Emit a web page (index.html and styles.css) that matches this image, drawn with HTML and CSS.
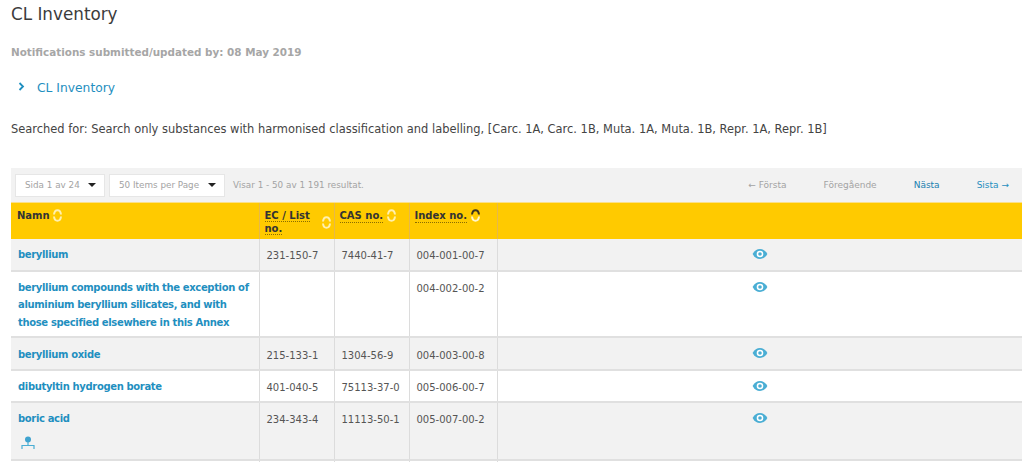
FILE: index.html
```html
<!DOCTYPE html>
<html lang="en">
<head>
    <meta charset="UTF-8">
    <title>CL Inventory</title>
    <link rel="stylesheet" href="styles.css">
</head>
<body>
    <svg class="sprites" width="0" height="0" aria-hidden="true">
        <symbol id="eye" viewBox="0 0 16 12">
            <path d="M0.6 6C2.4 2.7 5 1 8 1s5.6 1.700 7.400 5C13.600 9.300 11 11 8 11S2.400 9.300 0.600 6z" fill="#4aaed4"/>
            <circle cx="8" cy="6" r="3.300" fill="#fff"/>
            <circle cx="8" cy="6" r="1.800" fill="#4aaed4"/>
        </symbol>
        <symbol id="sort" viewBox="0 0 9 13">
            <path d="M1 5.500C1.300 2.800 2.700 1.200 4.500 1.200S7.700 2.800 8 5.500" fill="none" stroke="#fff0b0" stroke-width="2"/>
            <path d="M1 7.500C1.300 10.200 2.700 11.800 4.500 11.800S7.700 10.200 8 7.500" fill="none" stroke="#fff0b0" stroke-width="2"/>
        </symbol>
        <symbol id="sort-up" viewBox="0 0 9 13">
            <path d="M1 5.500C1.300 2.800 2.700 1.200 4.500 1.200S7.700 2.800 8 5.500" fill="none" stroke="#3a3320" stroke-width="2"/>
            <path d="M1 7.500C1.300 10.200 2.700 11.800 4.500 11.800S7.700 10.200 8 7.500" fill="none" stroke="#fff6cc" stroke-width="2"/>
        </symbol>
    </svg>

    <h1 class="page-title">CL Inventory</h1>
    <p class="notified">Notifications submitted/updated by: 08 May 2019</p>
    <a class="crumb" href="#">
        <svg class="crumb-arrow" width="7" height="9" viewBox="0 0 7 9"><path d="M1.500 1L5 4.500L1.500 8" fill="none" stroke="#1f8fc0" stroke-width="1.800"/></svg>
        <span>CL Inventory</span>
    </a>
    <p class="searched">Searched for: Search only substances with harmonised classification and labelling, [Carc. 1A, Carc. 1B, Muta. 1A, Muta. 1B, Repr. 1A, Repr. 1B]</p>

    <div class="toolbar">
        <div class="select select-page"><span>Sida 1 av 24</span><i class="caret"></i></div>
        <div class="select select-items"><span>50 Items per Page</span><i class="caret"></i></div>
        <span class="result-count">Visar 1 - 50 av 1 191 resultat.</span>
        <nav class="pager">
            <span>← Första</span>
            <span>Föregående</span>
            <a class="pager-next" href="#">Nästa</a>
            <a href="#">Sista →</a>
        </nav>
    </div>

    <table class="results">
        <colgroup>
            <col class="col-name"><col class="col-ec"><col class="col-cas"><col class="col-index"><col>
        </colgroup>
        <thead>
            <tr>
                <th><span class="th-inner th-name"><span>Namn</span><svg class="sort"><use href="#sort"/></svg></span></th>
                <th><span class="th-inner th-wrap"><span><abbr>EC / List</abbr> <abbr>no.</abbr></span><svg class="sort sort-mid"><use href="#sort"/></svg></span></th>
                <th><span class="th-inner"><abbr>CAS no.</abbr><svg class="sort"><use href="#sort"/></svg></span></th>
                <th><span class="th-inner"><abbr>Index no.</abbr><svg class="sort"><use href="#sort-up"/></svg></span></th>
                <th></th>
            </tr>
        </thead>
        <tbody>
            <tr>
                <td class="name"><a href="#">beryllium</a></td>
                <td>231-150-7</td><td>7440-41-7</td><td>004-001-00-7</td>
                <td class="view"><svg class="eye"><use href="#eye"/></svg></td>
            </tr>
            <tr>
                <td class="name"><a href="#">beryllium compounds with the exception of aluminium beryllium silicates, and with those specified elsewhere in this Annex</a></td>
                <td></td><td></td><td>004-002-00-2</td>
                <td class="view"><svg class="eye"><use href="#eye"/></svg></td>
            </tr>
            <tr class="row-tall">
                <td class="name"><a href="#">beryllium oxide</a></td>
                <td>215-133-1</td><td>1304-56-9</td><td>004-003-00-8</td>
                <td class="view"><svg class="eye"><use href="#eye"/></svg></td>
            </tr>
            <tr>
                <td class="name"><a href="#">dibutyltin hydrogen borate</a></td>
                <td>401-040-5</td><td>75113-37-0</td><td>005-006-00-7</td>
                <td class="view"><svg class="eye"><use href="#eye"/></svg></td>
            </tr>
            <tr>
                <td class="name">
                    <a href="#">boric acid</a>
                    <svg class="tree" width="14" height="14" viewBox="0 0 14 14">
                        <circle cx="7" cy="3.500" r="3" fill="#3fa3cf"/>
                        <path d="M7 6v3M1 13V9.500h12V13" fill="none" stroke="#4aaed4" stroke-width="1.200"/>
                    </svg>
                </td>
                <td>234-343-4</td><td>11113-50-1</td><td>005-007-00-2</td>
                <td class="view"><svg class="eye"><use href="#eye"/></svg></td>
            </tr>
            <tr>
                <td class="name"></td><td></td><td></td><td></td><td></td>
            </tr>
        </tbody>
    </table>
</body>
</html>
```

FILE: styles.css
```css
html, body {
    height: 462px;
    overflow: hidden;
}
body {
    margin: 0;
    padding: 0 2px 0 11px;
    font-family: "DejaVu Sans", Verdana, sans-serif;
    font-size: 11px;
    color: #444;
    background: #fff;
}
a {
    color: #1f8fc0;
    text-decoration: none;
}
.sprites {
    position: absolute;
}
.page-title {
    margin: 0;
    padding-top: 3px;
    font-size: 16.800px;
    line-height: 22px;
    font-weight: 400;
    color: #3c3c3c;
}
.notified {
    margin: 20px 0 0;
    font-size: 10.400px;
    line-height: 14px;
    font-weight: 700;
    color: #a6a6a6;
}
.crumb {
    display: flex;
    align-items: center;
    gap: 12px;
    margin: 21px 0 0 7px;
    font-size: 12.300px;
    line-height: 16px;
}
.crumb-arrow {
    margin-top: -4px;
}
.searched {
    margin: 25px 0 0;
    font-size: 11.450px;
    line-height: 16px;
}
.toolbar {
    display: flex;
    align-items: center;
    height: 34px;
    margin-top: 31px;
    padding: 0 13px 0 4px;
    background: #f2f2f2;
    font-size: 8.800px;
    color: #a3a3a3;
}
.select {
    display: flex;
    align-items: center;
    justify-content: space-between;
    height: 23px;
    margin-right: 4px;
    padding: 0 8px 0 9px;
    background: #fff;
    border: 1px solid #e6e6e6;
    box-sizing: border-box;
}
.select-page { width: 90px; }
.select-items { width: 116px; }
.caret {
    width: 0;
    height: 0;
    border: 4px solid transparent;
    border-top-color: #222;
    border-bottom: 0;
}
.result-count {
    margin-left: 4px;
}
.pager {
    display: flex;
    margin-left: auto;
    gap: 37px;
    font-size: 9px;
}
.pager-next {
    color: #1a80b0;
}
.results {
    width: 1011px;
    border-collapse: collapse;
    table-layout: fixed;
    font-size: 10px;
}
.col-name { width: 248px; }
.col-ec { width: 75px; }
.col-cas { width: 75px; }
.col-index { width: 88px; }
.results th {
    height: 36px;
    padding: 6px 5px 0 5px;
    box-sizing: border-box;
    background: #ffca00;
    border-left: 1px solid #e6b84a;
    border-top: 1px solid #fbe08a;
    vertical-align: top;
    text-align: left;
    font-size: 10px;
    line-height: 13px;
    color: #333;
}
.results th:first-child {
    border-left: 0;
    padding-left: 6px;
}
.th-inner {
    display: flex;
    align-items: flex-start;
    gap: 4px;
}
.th-name {
    gap: 3px;
}
.th-wrap {
    justify-content: space-between;
}
.th-wrap span {
    flex: 1;
}
abbr {
    border-bottom: 1px dotted #8a6d00;
}
.sort {
    flex: none;
    width: 9px;
    height: 13px;
}
.sort-mid {
    margin-top: 7px;
    margin-right: -2px;
}
.results td {
    height: 32px;
    box-sizing: border-box;
    padding: 10px 7px 0 7px;
    border-left: 1px solid #dcdcdc;
    border-bottom: 2px solid #e0e0e0;
    vertical-align: top;
    line-height: 13px;
    color: #555;
}
.results td:first-child {
    border-left: 0;
}
.results tbody tr:nth-child(odd) td {
    background: #f2f2f2;
}
.results td.name {
    padding: 7px 4px 4.500px 7px;
    line-height: 17.500px;
    letter-spacing: -0.350px;
    font-weight: 700;
}
.results .row-tall td {
    height: 33px;
    padding-top: 11px;
}
.results .row-tall td.name {
    padding-top: 8px;
}
.results td.view,
.results .row-tall td.view {
    padding: 9.500px 0 0;
}
.eye {
    display: block;
    width: 16px;
    height: 12px;
    margin: 0 auto;
}
.tree {
    display: block;
    margin: 9px 0 4px 3px;
}
```
